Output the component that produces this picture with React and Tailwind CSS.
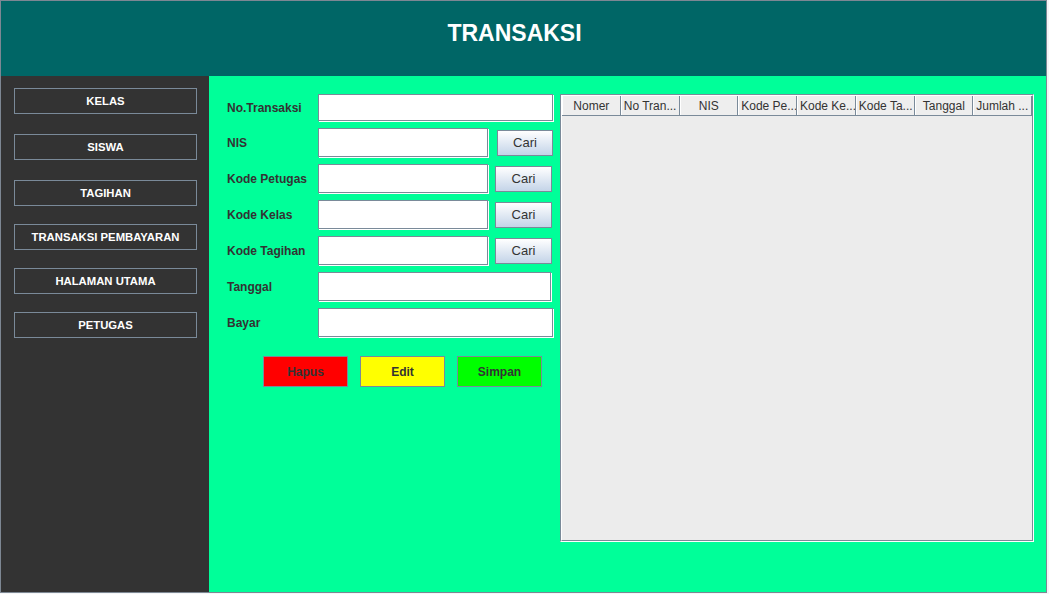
import React from "react";

const font = { fontFamily: '"Liberation Sans", Arial, sans-serif' };

function SideBtn({ label, mt }) {
  return (
    <div
      className={`${mt} ml-[13px] w-[183px] h-[26px] border border-[#7a8a99] flex items-center justify-center pt-[1px] text-white font-bold text-[11.3px]`}
    >
      {label}
    </div>
  );
}

function Field({ w, h = "h-[29px]" }) {
  return (
    <div
      className={`${w} ${h} bg-white border border-[#7a8a99] shadow-[1px_1px_0_#ffffff]`}
    />
  );
}

function Cari({ ml, w }) {
  return (
    <div
      className={`${ml} ${w} h-[26px] border border-[#7a8a99] bg-gradient-to-b from-[#ffffff] to-[#c4d4e8] flex items-center justify-center pt-[1px] text-[13px] text-[#333333]`}
    >
      Cari
    </div>
  );
}

function Row({ label, children, mt }) {
  return (
    <div className={`flex items-center ${mt}`}>
      <div className="w-[91px] pt-[1px] text-[12px] font-bold text-[#333333]">{label}</div>
      {children}
    </div>
  );
}

const cols = ["Nomer", "No Tran...", "NIS", "Kode Pe...", "Kode Ke...", "Kode Ta...", "Tanggal", "Jumlah ..."];
const centered = [true, false, true, false, false, false, true, false];

export default function App() {
  return (
    <div style={font} className="w-[1049px] h-[594px] bg-[#f4f6f8] overflow-hidden">
      <div className="w-[1047px] h-[593px] border border-[#7d8793] flex flex-col">
        <div className="h-[75px] bg-[#006666] flex items-center justify-center pb-[10px] pr-[18px]">
          <span className="text-white font-bold text-[23px]">TRANSAKSI</span>
        </div>
        <div className="flex flex-1">
          <div className="w-[208px] bg-[#333333] flex flex-col pt-[12px]">
            <SideBtn label="KELAS" mt="mt-0" />
            <SideBtn label="SISWA" mt="mt-[20px]" />
            <SideBtn label="TAGIHAN" mt="mt-[20px]" />
            <SideBtn label="TRANSAKSI PEMBAYARAN" mt="mt-[18px]" />
            <SideBtn label="HALAMAN UTAMA" mt="mt-[18px]" />
            <SideBtn label="PETUGAS" mt="mt-[18px]" />
          </div>
          <div className="flex-1 bg-[#00ff99] flex">
            <div className="w-[351px] pl-[18px] pt-[18px] flex flex-col">
              <Row label="No.Transaksi" mt="mt-0">
                <Field w="w-[235px]" h="h-[27px]" />
              </Row>
              <Row label="NIS" mt="mt-[7px]">
                <Field w="w-[170px]" />
                <Cari ml="ml-[9px]" w="w-[56px]" />
              </Row>
              <Row label="Kode Petugas" mt="mt-[7px]">
                <Field w="w-[170px]" />
                <Cari ml="ml-[7px]" w="w-[57px]" />
              </Row>
              <Row label="Kode Kelas" mt="mt-[7px]">
                <Field w="w-[170px]" />
                <Cari ml="ml-[7px]" w="w-[57px]" />
              </Row>
              <Row label="Kode Tagihan" mt="mt-[7px]">
                <Field w="w-[170px]" />
                <Cari ml="ml-[7px]" w="w-[57px]" />
              </Row>
              <Row label="Tanggal" mt="mt-[7px]">
                <Field w="w-[233px]" />
              </Row>
              <Row label="Bayar" mt="mt-[7px]">
                <Field w="w-[235px]" />
              </Row>
              <div className="flex mt-[19px] pl-[36px] gap-[12px]">
                <div className="w-[85px] h-[31px] bg-[#ff0000] border border-[#7a8a99] flex items-center justify-center text-[12px] font-bold text-[#333333]">Hapus</div>
                <div className="w-[85px] h-[31px] bg-[#ffff00] border border-[#7a8a99] flex items-center justify-center text-[12px] font-bold text-[#333333]">Edit</div>
                <div className="w-[85px] h-[31px] bg-[#00ff00] border border-[#7a8a99] flex items-center justify-center text-[12px] font-bold text-[#333333]">Simpan</div>
              </div>
            </div>
            <div className="pt-[18px]">
              <div className="w-[474px] h-[448px] border border-[#7a8a99] border-r-white border-b-white flex flex-col">
                <div className="flex-1 border border-white border-r-[#7a8a99] border-b-[#7a8a99] bg-[#ececec] flex flex-col">
                  <div className="flex h-[20px] bg-[#eeeeee] border-b border-[#7a8a99]">
                    {cols.map((c, i) => (
                      <div
                        key={c}
                        className={`w-[59px] h-full border-r border-[#7a8a99] border-l border-l-white flex items-center text-[12px] text-[#333333] whitespace-nowrap overflow-hidden ${centered[i] ? "justify-center" : "justify-start pl-[2px]"}`}
                      >
                        {c}
                      </div>
                    ))}
                  </div>
                  <div className="flex-1" />
                </div>
              </div>
            </div>
          </div>
        </div>
      </div>
    </div>
  );
}
